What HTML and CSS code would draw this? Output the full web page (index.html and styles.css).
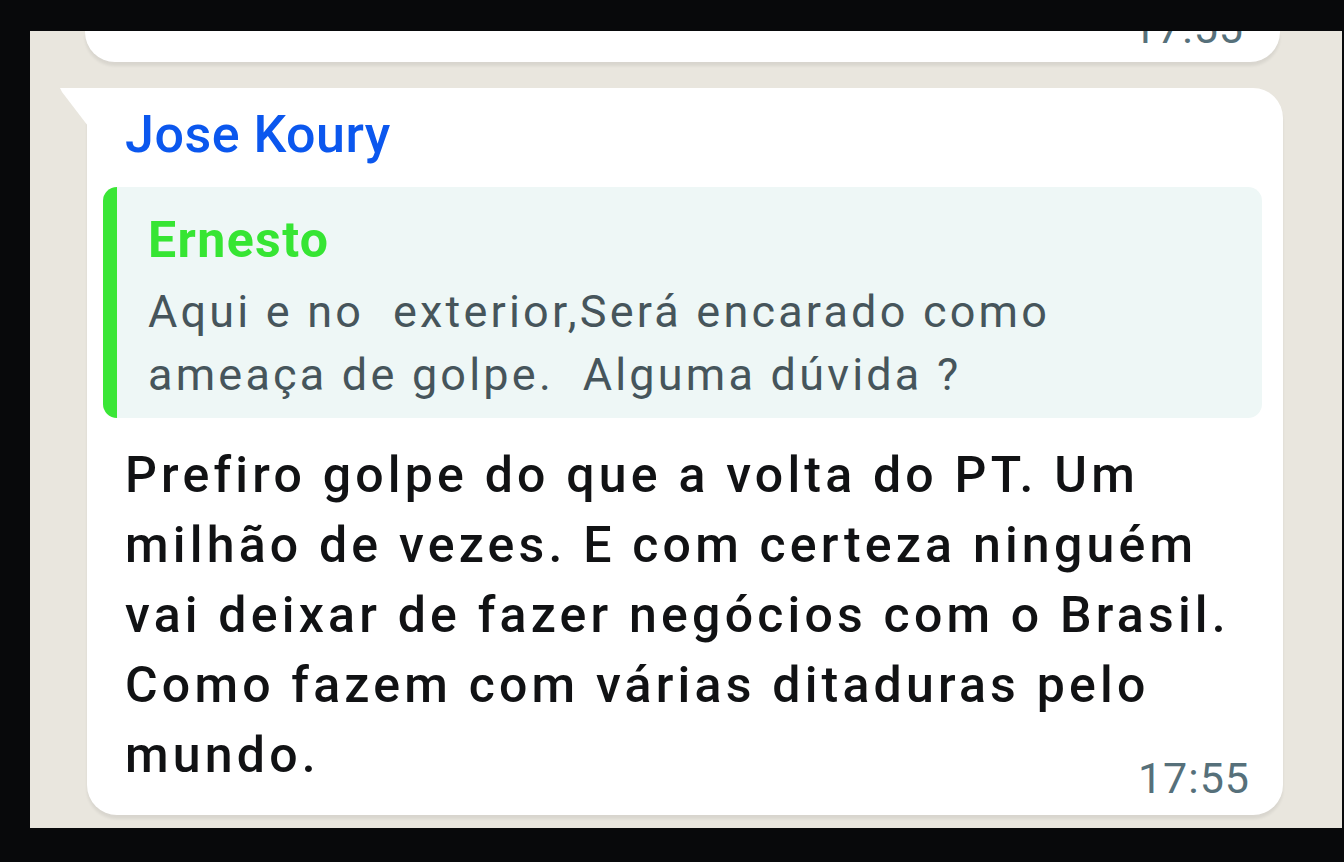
FILE: index.html
```html
<!DOCTYPE html>
<html>
<head>
    <meta charset="UTF-8">
    <link rel="stylesheet" href="styles.css">
</head>

<body>
    <div class="frame">
        <div class="chat">
            <!-- previous message, cut off by the top edge -->
            <div class="bubble prev">
                <span class="time">17:55</span>
            </div>

            <div class="bubble incoming">
                <div class="sender">Jose Koury</div>

                <div class="quote">
                    <div class="quote-author">Ernesto</div>
                    <div class="quote-text">Aqui e no &nbsp;exterior,Será encarado como<br>ameaça de golpe. &nbsp;Alguma dúvida ?</div>
                </div>

                <div class="message">Prefiro golpe do que a volta do PT. Um<br>milhão de vezes. E com certeza ninguém<br>vai deixar de fazer negócios com o Brasil.<br>Como fazem com várias ditaduras pelo<br>mundo.</div>

                <div class="meta">
                    <span class="time">17:55</span>
                </div>
            </div>
        </div>
    </div>
</body>
</html>
```

FILE: styles.css
```css
body {
    margin: 0;
    background: #08090b;
    font-family: Roboto, "Noto Sans", sans-serif;
    overflow: hidden;
}

.frame {
    padding: 31px 2px 34px 30px;
}

.chat {
    height: 797px;
    background: #e9e6de;
    padding: 0 59px 0 57px;
    overflow: hidden;
}

.bubble {
    position: relative;
    background: #fff;
    border-radius: 30px;
    box-shadow: 0 4px 3px rgba(0, 0, 0, 0.07);
}

.time {
    color: #56707a;
    font-size: 43px;
    line-height: 50px;
    letter-spacing: 1px;
}

/* older message, only the bottom edge shows */
.bubble.prev {
    height: 31px;
    margin-right: 3px;
    margin-left: -2px;
    border-radius: 0 0 30px 30px;
    display: flex;
    justify-content: flex-end;
    align-items: flex-end;
    padding-right: 36px;
    overflow: hidden;
}

.bubble.prev .time {
    margin-bottom: 9px;
}

.bubble.incoming {
    margin-top: 26px;
    border-top-left-radius: 0;
    padding: 17px 21px 12px 16px;
}

/* tail at the top left corner */
.bubble.incoming::before {
    content: "";
    position: absolute;
    left: -27px;
    top: 0;
    width: 28px;
    height: 38px;
    background: #fff;
    clip-path: polygon(0 0, 100% 0, 100% 100%, 2px 4px);
}

.sender {
    padding-left: 22px;
    color: #0b57ee;
    font-size: 52px;
    font-weight: 500;
    line-height: 60px;
    letter-spacing: 0.5px;
}

.quote {
    margin-top: 22px;
    background: #eef7f6;
    border-left: 14px solid #3ae636;
    border-radius: 14px;
    padding: 23px 20px 12px 31px;
}

.quote-author {
    color: #36e533;
    font-size: 50px;
    font-weight: 700;
    line-height: 60px;
    letter-spacing: 1.4px;
}

.quote-text {
    margin-top: 10px;
    color: #46555b;
    font-size: 45px;
    line-height: 63px;
    letter-spacing: 3.2px;
}

.message {
    margin-top: 22px;
    padding-left: 22px;
    color: #111214;
    font-size: 50px;
    font-weight: 500;
    line-height: 70px;
    letter-spacing: 4.2px;
}

.meta {
    margin-top: -37px;
    display: flex;
    justify-content: flex-end;
    padding-right: 12px;
}
```
